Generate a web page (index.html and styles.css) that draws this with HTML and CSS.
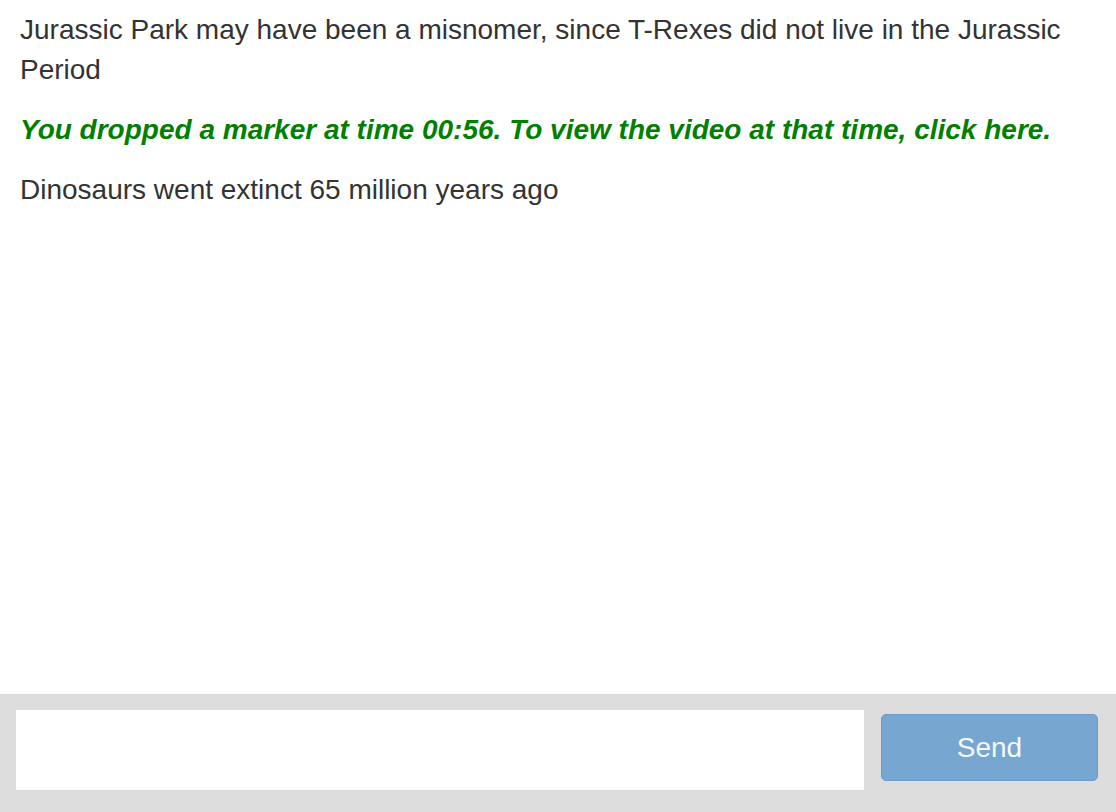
FILE: index.html
```html
<!DOCTYPE html>
<html>
<head>
<meta charset="utf-8">
<link rel="stylesheet" href="styles.css">
</head>
<body>
<div class="app">
  <div class="messages">
    <p class="msg">Jurassic Park may have been a misnomer, since T-Rexes did not live in the Jurassic Period</p>
    <p class="msg marker">You dropped a marker at time 00:56. To view the video at that time, click here.</p>
    <p class="msg">Dinosaurs went extinct 65 million years ago</p>
  </div>
  <div class="composer">
    <input class="input" type="text">
    <button class="send">Send</button>
  </div>
</div>
</body>
</html>
```
FILE: styles.css
```css
html, body {
  margin: 0;
  padding: 0;
  height: 100%;
  background: #fff;
}
.app {
  display: flex;
  flex-direction: column;
  height: 812px;
  font-family: "Liberation Sans", Arial, sans-serif;
  color: #333;
}
.messages {
  flex: 1;
  padding: 10px 20px 0 20px;
}
.msg {
  margin: 0 0 20px 0;
  font-size: 28px;
  line-height: 40px;
}
.marker {
  color: #008000;
  font-weight: bold;
  font-style: italic;
}
.composer {
  height: 118px;
  box-sizing: border-box;
  background: #dddddd;
  display: flex;
  align-items: flex-start;
  gap: 17px;
  padding: 16px 18px 0 16px;
}
.input {
  flex: 1;
  height: 80px;
  border: none;
  background: #fff;
  margin: 0;
  padding: 0 12px;
  box-sizing: border-box;
  outline: none;
}
.send {
  width: 217px;
  height: 67px;
  margin-top: 4px;
  box-sizing: border-box;
  background: #77a7d0;
  border: 1px solid #6c9cc6;
  border-radius: 5px;
  color: #f4f7fa;
  font-family: "Liberation Sans", Arial, sans-serif;
  font-size: 28px;
  padding: 0;
}
```
